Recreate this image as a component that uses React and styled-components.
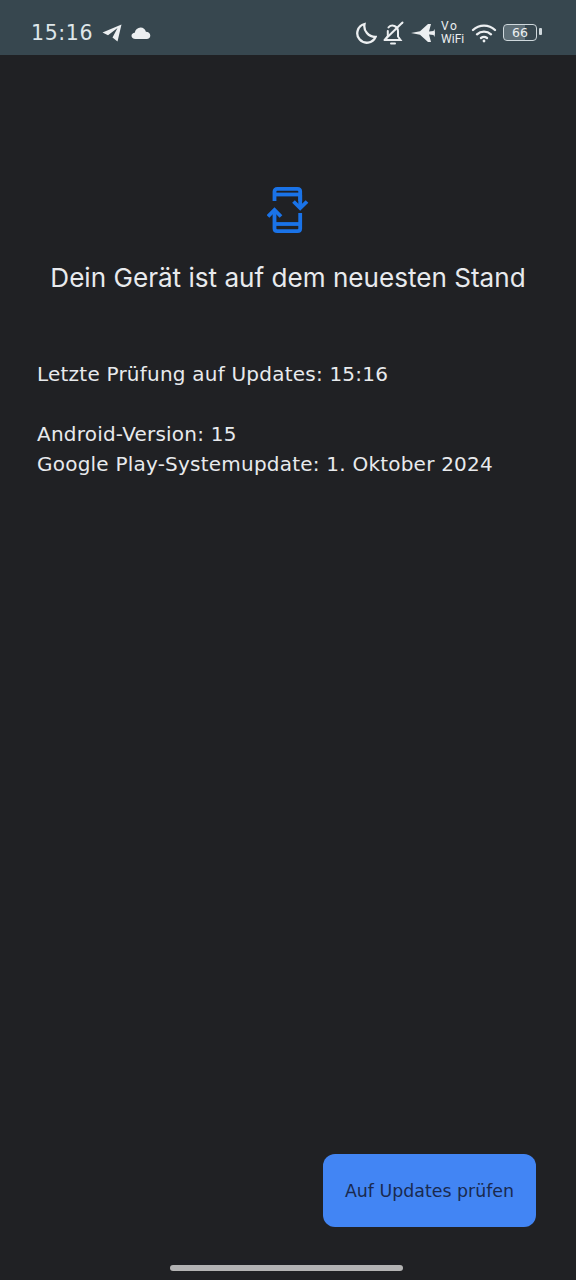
import React from 'react';
import styled, { createGlobalStyle } from 'styled-components';

const GlobalStyle = createGlobalStyle`
  html, body {
    margin: 0;
    padding: 0;
    background: #202124;
  }
`;

const Screen = styled.div`
  width: 576px;
  height: 1280px;
  display: flex;
  flex-direction: column;
  background: #202124;
  overflow: hidden;
`;

const StatusBar = styled.div`
  height: 55px;
  flex: none;
  box-sizing: border-box;
  padding: 10px 39px 0 31px;
  display: flex;
  align-items: center;
  justify-content: space-between;
  background: #37474f;
  color: #eceff1;
`;

const StatusGroup = styled.div`
  display: flex;
  align-items: center;
  gap: ${(p) => p.$gap}px;
`;

const Clock = styled.span`
  font: 20.5px "DejaVu Sans", sans-serif;
  letter-spacing: 0.6px;
  color: #dfe6e9;
`;

const VoWifi = styled.span`
  display: flex;
  flex-direction: column;
  align-items: flex-start;
  font: 400 12px/13px "Roboto", sans-serif;
  color: #eceff1;
`;

const VoLabel = styled.span`
  letter-spacing: 1.5px;
`;

const Battery = styled.span`
  position: relative;
  box-sizing: border-box;
  width: 34px;
  height: 17px;
  border: 1.5px solid #cfd8dc;
  border-radius: 4px;
  display: flex;
  align-items: center;
  justify-content: center;
  background: linear-gradient(90deg, #5f6f77 66%, transparent 66%);
  background-clip: padding-box;
  font: 12.5px "DejaVu Sans", sans-serif;
  color: #eceff1;

  &::after {
    content: '';
    position: absolute;
    right: -6px;
    top: 3px;
    width: 3px;
    height: 7px;
    border-radius: 1px;
    background: #cfd8dc;
  }
`;

const Content = styled.main`
  flex: 1;
  display: flex;
  flex-direction: column;
  padding: 132px 37px 0;
`;

const Hero = styled.div`
  display: flex;
  flex-direction: column;
  align-items: center;
  margin-bottom: 63px;
`;

const Heading = styled.h1`
  margin: 27px 0 0;
  font: 400 26.1px/36px "Inter", sans-serif;
  color: #e8eaed;
  white-space: nowrap;
`;

const InfoBlock = styled.div`
  display: flex;
  flex-direction: column;
  margin-bottom: ${(p) => p.$after || 0}px;
`;

const InfoLine = styled.p`
  margin: 0;
  font: 20px/30px "DejaVu Sans", sans-serif;
  letter-spacing: 0.22px;
  color: #e8eaed;
  white-space: nowrap;
`;

const Footer = styled.footer`
  display: flex;
  justify-content: flex-end;
  padding: 0 40px 38px;
`;

const UpdateButton = styled.button`
  width: 213px;
  height: 73px;
  border: none;
  border-radius: 12px;
  background: #4285f4;
  color: #1a2a4f;
  font: 17.4px "DejaVu Sans", sans-serif;
  padding: 0;
`;

const NavArea = styled.div`
  height: 15px;
  flex: none;
  padding-right: 4px;
  display: flex;
  justify-content: center;
`;

const HomeBar = styled.div`
  width: 233px;
  height: 6px;
  border-radius: 3px;
  background: #b3b3b3;
`;

const TelegramIcon = () => (
  <svg width="20" height="18" viewBox="0 0 20 18" fill="#eceff1">
    <path d="M0.5 8.5 19.5 0.5 15.5 17.5 10.5 13.5 15.5 4 6 11.2Z" />
  </svg>
);

const CloudIcon = () => (
  <svg width="20" height="14" viewBox="0 0 20 14" fill="#eceff1">
    <path d="M4.5 13C2 13 .5 11.6.5 9.8.5 8 2 6.8 3.7 6.7 4.4 3.6 6.6 1.5 9.6 1.5c2.7 0 4.6 1.8 5.3 4.2 2.4 0 4.4 1.6 4.4 3.9 0 2-1.4 3.4-3.6 3.4Z" />
  </svg>
);

const MoonIcon = () => (
  <svg width="21" height="22" viewBox="0 0 21 22" fill="none" stroke="#eceff1" strokeWidth="2.3">
    <path d="M8.5 2A9.5 9.5 0 1 0 19.5 15 11 11 0 0 1 8.5 2Z" />
  </svg>
);

const BellOffIcon = () => (
  <svg width="21" height="24" viewBox="0 0 21 24" fill="none" stroke="#eceff1" strokeWidth="2" strokeLinecap="round">
    <path d="M2 19h15.5l-2.5-3.5V10a5.5 5.5 0 0 0-9.5-3.6M4.8 10V15L2 19" />
    <path d="M8 22.5h4" />
    <path d="M1.5 19 19.5 1.5" />
  </svg>
);

const PlaneIcon = () => (
  <svg width="24" height="20" viewBox="0 0 24 20" fill="#eceff1">
    <path d="M0 10 9 8.2 17 1 20 1 18 8.5 22.5 8 23.5 6 24 10 23.5 14 22.5 12 18 11.5 20 19 17 19 9 11.8Z" />
  </svg>
);

const WifiIcon = () => (
  <svg width="26" height="20" viewBox="0 0 26 20" fill="none" stroke="#eceff1" strokeWidth="2.4" strokeLinecap="round">
    <path d="M2 7A16 16 0 0 1 24 7" />
    <path d="M6 11.3A10.5 10.5 0 0 1 20 11.3" />
    <path d="M10 15a5 5 0 0 1 6 0" />
    <circle cx="13" cy="18" r="1.4" fill="#eceff1" stroke="none" />
  </svg>
);

const SystemUpdateIcon = () => (
  <svg width="42" height="46" viewBox="0 0 42 46" fill="none" stroke="#1a73e8" strokeWidth="3.8">
    <path d="M7.5 14V4.5Q7.5 1.9 10.3 1.9H30.5Q33.2 1.9 33.2 4.5V14" />
    <path d="M7.5 7.5H33.2" />
    <path d="M7.5 23V41.5Q7.5 44.1 10.3 44.1H30.5Q33.2 44.1 33.2 41.5V26" />
    <path d="M7.5 37H33.2" />
    <path d="M33.2 8V20" />
    <path d="M26.5 14.5 33.2 21 40 14.5" />
    <path d="M1 29.5 7.5 23 14 29.5" />
  </svg>
);

const App = () => {
  return (
    <Screen>
      <GlobalStyle />
      <StatusBar>
        <StatusGroup $gap={9}>
          <Clock>15:16</Clock>
          <TelegramIcon />
          <CloudIcon />
        </StatusGroup>
        <StatusGroup $gap={6.4}>
          <MoonIcon />
          <BellOffIcon />
          <PlaneIcon />
          <VoWifi>
            <VoLabel>Vo</VoLabel>
            <span>WiFi</span>
          </VoWifi>
          <WifiIcon />
          <Battery>66</Battery>
        </StatusGroup>
      </StatusBar>
      <Content>
        <Hero>
          <SystemUpdateIcon />
          <Heading>Dein Gerät ist auf dem neuesten Stand</Heading>
        </Hero>
        <InfoBlock $after={30}>
          <InfoLine>Letzte Prüfung auf Updates: 15:16</InfoLine>
        </InfoBlock>
        <InfoBlock>
          <InfoLine>Android-Version: 15</InfoLine>
          <InfoLine>Google Play-Systemupdate: 1. Oktober 2024</InfoLine>
        </InfoBlock>
      </Content>
      <Footer>
        <UpdateButton>Auf Updates prüfen</UpdateButton>
      </Footer>
      <NavArea>
        <HomeBar />
      </NavArea>
    </Screen>
  );
};

export default App;
